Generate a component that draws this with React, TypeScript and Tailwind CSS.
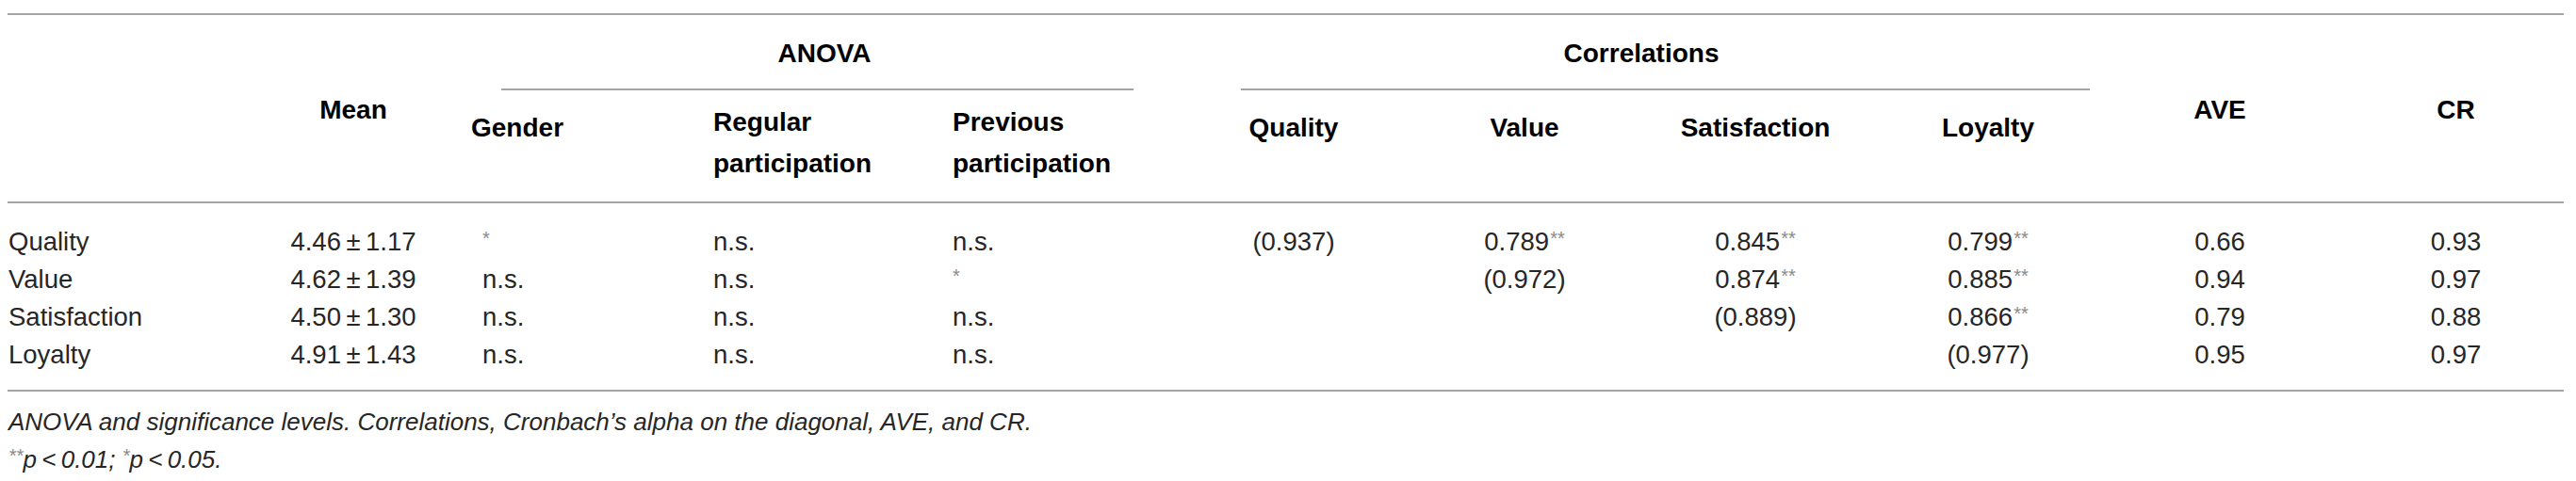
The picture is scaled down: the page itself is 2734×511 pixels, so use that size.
type Cell = { t?: string; star?: string };

type Row = {
  label: string;
  mean: string;
  gender: Cell;
  regular: Cell;
  previous: Cell;
  quality: Cell;
  value: Cell;
  satisfaction: Cell;
  loyalty: Cell;
  ave: string;
  cr: string;
};

const rows: Row[] = [
  {
    label: 'Quality',
    mean: '4.46\u2009±\u20091.17',
    gender: { star: '*' },
    regular: { t: 'n.s.' },
    previous: { t: 'n.s.' },
    quality: { t: '(0.937)' },
    value: { t: '0.789', star: '**' },
    satisfaction: { t: '0.845', star: '**' },
    loyalty: { t: '0.799', star: '**' },
    ave: '0.66',
    cr: '0.93',
  },
  {
    label: 'Value',
    mean: '4.62\u2009±\u20091.39',
    gender: { t: 'n.s.' },
    regular: { t: 'n.s.' },
    previous: { star: '*' },
    quality: {},
    value: { t: '(0.972)' },
    satisfaction: { t: '0.874', star: '**' },
    loyalty: { t: '0.885', star: '**' },
    ave: '0.94',
    cr: '0.97',
  },
  {
    label: 'Satisfaction',
    mean: '4.50\u2009±\u20091.30',
    gender: { t: 'n.s.' },
    regular: { t: 'n.s.' },
    previous: { t: 'n.s.' },
    quality: {},
    value: {},
    satisfaction: { t: '(0.889)' },
    loyalty: { t: '0.866', star: '**' },
    ave: '0.79',
    cr: '0.88',
  },
  {
    label: 'Loyalty',
    mean: '4.91\u2009±\u20091.43',
    gender: { t: 'n.s.' },
    regular: { t: 'n.s.' },
    previous: { t: 'n.s.' },
    quality: {},
    value: {},
    satisfaction: {},
    loyalty: { t: '(0.977)' },
    ave: '0.95',
    cr: '0.97',
  },
];

const cols = 'grid grid-cols-[242px_250px_257px_254px_239px_246px_244px_246px_248px_244px_243px]';

function Star({ s, gap = true }: { s: string; gap?: boolean }) {
  return (
    <span className={`relative -top-[6px] text-[20px] leading-none text-[#8a8a8a] ${gap ? 'ml-[1px]' : ''}`}>{s}</span>
  );
}

function Value({ c }: { c: Cell }) {
  return (
    <>
      {c.t}
      {c.star ? <Star s={c.star} gap={!!c.t} /> : null}
    </>
  );
}

export default function App() {
  return (
    <div className="h-[511px] w-[2734px] bg-white font-['Liberation_Sans',Arial,sans-serif] text-[#262626]">
      <div className="ml-[8px] mt-[14px] w-[2713px] border-t-2 border-[#a3a3a3]">
        {/* header */}
        <div className={`${cols} grid-rows-[80px_118px] text-[28px] font-bold leading-[40px] text-black`}>
          <div className="col-start-1 row-span-2 row-start-1" />
          <div className="col-start-2 row-span-2 row-start-1 flex items-center justify-center pt-[4px]">Mean</div>
          <div className="col-span-3 col-start-3 row-start-1 flex flex-col">
            <div className="pt-[21px] text-center">ANOVA</div>
            <div className="ml-[32px] mr-[47px] mt-[17px] h-[2px] bg-[#a3a3a3]" />
          </div>
          <div className="col-span-4 col-start-6 row-start-1 flex flex-col">
            <div className="pt-[21px] text-center">Correlations</div>
            <div className="ml-[67px] mr-[16px] mt-[17px] h-[2px] bg-[#a3a3a3]" />
          </div>
          <div className="col-start-10 row-span-2 row-start-1 flex items-center justify-center pt-[4px]">AVE</div>
          <div className="col-start-11 row-span-2 row-start-1 flex items-center justify-center pl-[14px] pt-[4px]">CR</div>

          <div className="col-start-3 row-start-2 pt-[20px]">Gender</div>
          <div className="col-start-4 row-start-2 pt-[12px] leading-[44px]">
            Regular
            <br />
            participation
          </div>
          <div className="col-start-5 row-start-2 pt-[12px] leading-[44px]">
            Previous
            <br />
            participation
          </div>
          <div className="col-start-6 row-start-2 pt-[20px] text-center">Quality</div>
          <div className="col-start-7 row-start-2 pt-[20px] text-center">Value</div>
          <div className="col-start-8 row-start-2 pt-[20px] text-center">Satisfaction</div>
          <div className="col-start-9 row-start-2 pt-[20px] text-center">Loyalty</div>
        </div>

        {/* body */}
        <div className="border-y-2 border-[#a3a3a3] pb-[17px] pt-[21px] text-[27.5px] leading-[40px]">
          {rows.map((r) => (
            <div key={r.label} className={`${cols} h-[40px] whitespace-nowrap`}>
              <div className="pl-[1px]">{r.label}</div>
              <div className="text-center">{r.mean}</div>
              <div className="pl-[12px]">
                <Value c={r.gender} />
              </div>
              <div>
                <Value c={r.regular} />
              </div>
              <div>
                <Value c={r.previous} />
              </div>
              <div className="text-center">
                <Value c={r.quality} />
              </div>
              <div className="text-center">
                <Value c={r.value} />
              </div>
              <div className="text-center">
                <Value c={r.satisfaction} />
              </div>
              <div className="text-center">
                <Value c={r.loyalty} />
              </div>
              <div className="text-center">{r.ave}</div>
              <div className="pl-[14px] text-center">{r.cr}</div>
            </div>
          ))}
        </div>

        <div className="mt-[12px] pl-[1px] text-[26px] italic leading-[40px]">
          <p>ANOVA and significance levels. Correlations, Cronbach’s alpha on the diagonal, AVE, and CR.</p>
          <p>
            <Star s="**" gap={false} />
            p{'\u2009'}&lt;{'\u2009'}0.01; <Star s="*" gap={false} />
            p{'\u2009'}&lt;{'\u2009'}0.05.
          </p>
        </div>
      </div>
    </div>
  );
}
